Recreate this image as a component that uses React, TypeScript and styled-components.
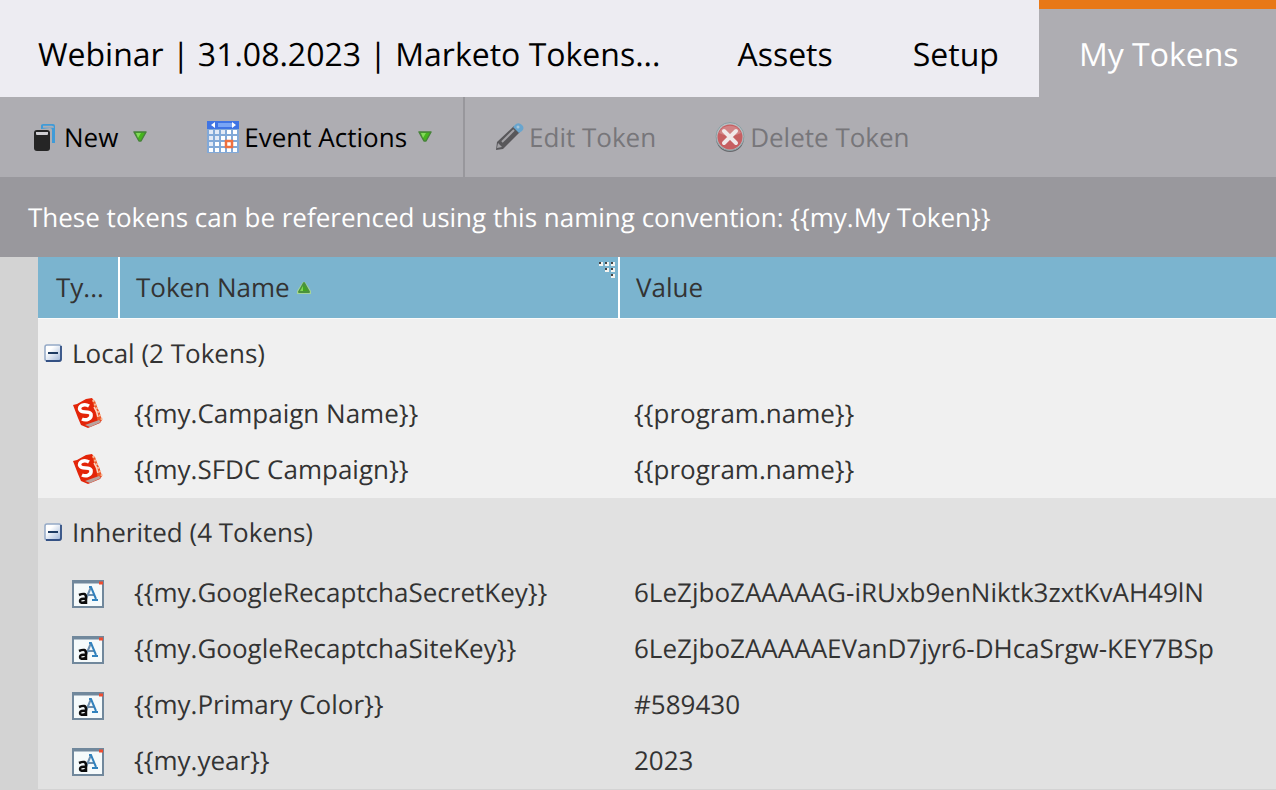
import React from 'react';
import styled, { createGlobalStyle } from 'styled-components';

const GlobalStyle = createGlobalStyle`
  *, *::before, *::after { box-sizing: border-box; }
  html { overflow: hidden; }
  body {
    margin: 0;
    background: #e1e1e1;
    color: #333333;
    font-family: "Open Sans", "Noto Sans", sans-serif;
    font-size: 26px;
    line-height: 36px;
    text-rendering: geometricPrecision;
  }
  button { text-rendering: inherit; }
`;

const Page = styled.div`
  display: flex;
  flex-direction: column;
  min-height: 100vh;
`;

const TabBar = styled.nav`
  display: flex;
  height: 97px;
  background: #aeadb2;
`;

const Tab = styled.a<{ $active?: boolean }>`
  display: flex;
  align-items: center;
  flex: ${(p) => (p.$active ? '1 0 auto' : '0 0 auto')};
  padding: ${(p) => (p.$active ? '4px 36px 0 40px' : '13px 40px 0')};
  border-top: ${(p) => (p.$active ? '9px solid #e87817' : 'none')};
  background: ${(p) => (p.$active ? '#aeadb2' : '#edecf2')};
  color: ${(p) => (p.$active ? '#ffffff' : '#000000')};
  font-size: 32px;
  line-height: 44px;
  text-decoration: none;
  white-space: nowrap;
  &:first-child { padding-left: 38px; padding-right: 37px; }
`;

const Toolbar = styled.div`
  display: flex;
  height: 80px;
  background: #aeadb2;
`;

const ToolGroup = styled.div<{ $divided?: boolean }>`
  display: flex;
  align-items: center;
  gap: 58px;
  padding: 0 30px 0 32px;
  border-right: ${(p) => (p.$divided ? '2px solid #98979c' : 'none')};
  & + & { padding-left: 30px; }
`;

const ToolButton = styled.button<{ $iconGap?: number }>`
  display: flex;
  align-items: center;
  gap: ${(p) => p.$iconGap ?? 4}px;
  padding: 0;
  border: 0;
  background: none;
  color: #000000;
  font: inherit;
  white-space: nowrap;
  &:disabled { color: #77767a; }
  svg { flex: none; }
`;

const Arrow = styled.span`
  display: flex;
  margin-left: 6px;
`;

const Notice = styled.p`
  margin: 0;
  padding: 22px 28px;
  background: #99989d;
  color: #ffffff;
`;

const GridArea = styled.main`
  flex: 1;
  padding-left: 38px;
  background: #d3d3d3;
`;

const Table = styled.table`
  width: 100%;
  border-collapse: separate;
  border-spacing: 0;
  table-layout: fixed;
  text-align: left;
`;

const TypeCol = styled.col`
  width: 82px;
`;

const NameCol = styled.col`
  width: 500px;
`;

const HeadCell = styled.th<{ $divided?: boolean }>`
  height: 62px;
  padding: 0 16px 2px;
  border-bottom: 1px solid #fafafa;
  border-right: ${(p) => (p.$divided ? '2px solid #ffffff' : 'none')};
  background: #7bb4cf;
  font-weight: 400;
  white-space: nowrap;
  &:first-child { padding: 0 0 2px 18px; }
`;

const HeadLabel = styled.div`
  position: relative;
  display: flex;
  align-items: center;
  gap: 6px;
`;

const Grip = styled.svg`
  position: absolute;
  top: -8px;
  right: -14px;
`;

const Group = styled.tbody<{ $shaded?: boolean }>`
  background: ${(p) => (p.$shaded ? '#e1e1e1' : '#f0f0f0')};
`;

const GroupCell = styled.th`
  height: 67px;
  padding: 0 6px;
  font-weight: 400;
`;

const GroupToggle = styled.button`
  display: flex;
  align-items: center;
  gap: 10px;
  padding: 0;
  border: 0;
  background: none;
  color: inherit;
  font: inherit;
`;

const Cell = styled.td`
  height: 56px;
  padding: 0 14px 2px;
  white-space: nowrap;
`;

const IconCell = styled(Cell)`
  padding: 0 34px 2px;
  svg { display: block; }
`;

const NewIcon = () => (
  <svg width="24" height="30" viewBox="0 0 24 30" aria-hidden="true">
    <path d="M9 7V3.500q0-1.500 2-1.500h10q2 0 2 2v17h-3V8q0-2-2-2" fill="#3f9bd8" />
    <path d="M11 4.800h9q1 0 1 1" fill="none" stroke="#aeadb2" strokeWidth="2" />
    <path d="M2 11q0-3 3-3h10q3 0 3 3v15q0 3-3 3H5q-3 0-3-3z" fill="#252525" />
    <path d="M4 10h12v2q0 1-1 1H5q-1 0-1-1z" fill="#cfced2" />
  </svg>
);

const CalendarIcon = () => (
  <svg width="34" height="34" viewBox="0 0 34 34" aria-hidden="true">
    <rect x="1" y="1" width="32" height="32" fill="#82a9d8" />
    <rect x="1" y="1" width="32" height="8" fill="#3f74e4" />
    <path d="M12 3h14v4H12z" fill="#79a5f5" />
    <path d="M9 2v6L5 5zM26 2v6l4-3z" fill="#ffffff" />
    {[10, 16, 22, 28].map((y) =>
      [3, 9, 15, 21, 27].map((x) => (
        <rect key={`${x}-${y}`} x={x} y={y} width="4" height="4" fill={x + y < 28 ? '#e2e9f5' : '#ffffff'} />
      )),
    )}
    <rect x="20" y="21" width="6" height="6" fill="#ffffff" stroke="#ee7040" strokeWidth="2.500" />
  </svg>
);

const PencilIcon = () => (
  <svg width="30" height="30" viewBox="0 0 30 30" aria-hidden="true">
    <path d="M1 28l1-8L19 4l6 6L8 27z" fill="#58575a" />
    <path d="M18 5l3-3q3-2 6 1t0 6l-3 2z" fill="#69a5ce" />
    <path d="M7 20L19 8" stroke="#a2a1a5" strokeWidth="2" />
    <path d="M2 26l1-5 4 4z" fill="#a2a1a5" />
    <circle cx="23" cy="5" r="1.500" fill="#a7c4d6" />
  </svg>
);

const DeleteIcon = () => (
  <svg width="32" height="32" viewBox="0 0 32 32" aria-hidden="true">
    <circle cx="16" cy="17" r="14" fill="#67676b" />
    <circle cx="16" cy="15.500" r="14" fill="#b7bdc1" stroke="#8ba0a4" strokeWidth="1" />
    <circle cx="16" cy="16" r="12.500" fill="#c65f62" />
    <path d="M5 12a12 12 0 0 1 22 0q-11 6-22 0z" fill="#d18385" />
    <path d="M10 10l12 12M22 10L10 22" stroke="#f0e8ea" strokeWidth="4" strokeLinecap="round" />
  </svg>
);

const DownArrow = () => (
  <svg width="16" height="16" viewBox="0 0 16 16" aria-hidden="true">
    <path d="M2 3h12L9 12H7z" fill="#45b51d" stroke="#47833a" strokeWidth="1.500" strokeLinejoin="round" />
    <path d="M4 4h5l-3 5z" fill="#83d95b" />
  </svg>
);

const SortArrow = () => (
  <svg width="16" height="16" viewBox="0 0 16 16" aria-hidden="true">
    <path d="M7 3L1 12v3h14v-3L9 3z" fill="#a5d597" />
    <path d="M8 4L3 13h10z" fill="#41a51f" stroke="#4b923d" strokeWidth="2" strokeLinejoin="round" />
    <path d="M7 7L4 12h3z" fill="#82d356" />
  </svg>
);

const gripDots = [[0, 0], [6, 0], [12, 0], [6, 6], [12, 6], [12, 12]];

const GripIcon = () => (
  <Grip width="18" height="18" viewBox="0 0 18 18" aria-hidden="true">
    {gripDots.map(([x, y]) => (
      <g key={`${x}-${y}`}>
        <rect x={x + 1} y={y + 1} width="4" height="4" fill="#f3f3f0" />
        <rect x={x + 1} y={y + 1} width="2" height="2" fill="#444444" />
      </g>
    ))}
  </Grip>
);

const MinusIcon = () => (
  <svg width="18" height="18" viewBox="0 0 18 18" aria-hidden="true">
    <defs>
      <linearGradient id="toggle" x1="0" y1="0" x2="1" y2="1">
        <stop offset="0.300" stopColor="#ffffff" />
        <stop offset="1" stopColor="#9db5d8" />
      </linearGradient>
    </defs>
    <rect x="1" y="1" width="16" height="16" rx="2" fill="url(#toggle)" stroke="#94a9c6" strokeWidth="1.500" />
    <path d="M17 2v13q0 2-2 2H2" fill="none" stroke="#345184" strokeWidth="1.800" />
    <path d="M4 9h10" stroke="#1d3b62" strokeWidth="2" />
  </svg>
);

const ScriptIcon = () => (
  <svg width="32" height="32" viewBox="0 0 32 32" aria-hidden="true">
    <path d="M1 8L5 7 14 2l6-1 2 3 2 5 3 5 3 9-2 3-12 5-7-3-3-7z" fill="#e32509" />
    <path d="M20 2l3 2 7 19-4 2z" fill="#ee5726" />
    <path d="M13 28l14-5 2 2-11 5z" fill="#b9a39e" />
    <path d="M21 3l9 20" stroke="#f6b999" strokeWidth="2" strokeDasharray="2 2" />
    <path d="M17 9C12 6 6 9 8 13c2 4 9 0 11 4 1 5-5 7-9 5" fill="none" stroke="#ffffff" strokeWidth="3.500" />
    <path d="M22 10q3 4 4 10" fill="none" stroke="#fbd5c6" strokeWidth="1.500" />
  </svg>
);

const TextIcon = () => (
  <svg width="32" height="32" viewBox="0 -4 32 32" aria-hidden="true">
    <rect x="1" y="1" width="30" height="26" fill="#f5fafb" stroke="#71889c" strokeWidth="2" />
    <path d="M1 2h30" stroke="#71889c" strokeWidth="3" />
    <path d="M27 3h4" stroke="#ee4d31" strokeWidth="3" />
    <path d="M14 19L19 7M16 15h6" fill="none" stroke="#6d8fae" strokeWidth="2" />
    <path d="M17 7h2l5 12M20 20h6" fill="none" stroke="#3182bd" strokeWidth="2" />
    <path d="M7 15q7-3 7 2v7M14 19q-6-1-6 2t6 1" fill="none" stroke="#0b0b0b" strokeWidth="2.500" />
  </svg>
);

type Token = { name: string; value: string };

const groups: { label: string; shaded: boolean; type: string; Icon: () => React.ReactElement; tokens: Token[] }[] = [
  {
    label: 'Local (2 Tokens)',
    shaded: false,
    type: 'Script',
    Icon: ScriptIcon,
    tokens: [
      { name: '{{my.Campaign Name}}', value: '{{program.name}}' },
      { name: '{{my.SFDC Campaign}}', value: '{{program.name}}' },
    ],
  },
  {
    label: 'Inherited (4 Tokens)',
    shaded: true,
    type: 'Text',
    Icon: TextIcon,
    tokens: [
      { name: '{{my.GoogleRecaptchaSecretKey}}', value: '6LeZjboZAAAAAG-iRUxb9enNiktk3zxtKvAH49lN' },
      { name: '{{my.GoogleRecaptchaSiteKey}}', value: '6LeZjboZAAAAAEVanD7jyr6-DHcaSrgw-KEY7BSp' },
      { name: '{{my.Primary Color}}', value: '#589430' },
      { name: '{{my.year}}', value: '2023' },
    ],
  },
];

export default function App() {
  return (
    <>
      <GlobalStyle />
      <Page>
        <TabBar>
          <Tab href="#program">Webinar | 31.08.2023 | Marketo Tokens...</Tab>
          <Tab href="#assets">Assets</Tab>
          <Tab href="#setup">Setup</Tab>
          <Tab href="#tokens" $active aria-current="page">My Tokens</Tab>
        </TabBar>
        <Toolbar>
          <ToolGroup $divided>
            <ToolButton $iconGap={8}>
              <NewIcon />
              New
              <Arrow><DownArrow /></Arrow>
            </ToolButton>
            <ToolButton>
              <CalendarIcon />
              Event Actions
              <Arrow><DownArrow /></Arrow>
            </ToolButton>
          </ToolGroup>
          <ToolGroup>
            <ToolButton disabled>
              <PencilIcon />
              Edit Token
            </ToolButton>
            <ToolButton disabled>
              <DeleteIcon />
              Delete Token
            </ToolButton>
          </ToolGroup>
        </Toolbar>
        <Notice>{'These tokens can be referenced using this naming convention: {{my.My Token}}'}</Notice>
        <GridArea>
          <Table>
            <colgroup>
              <TypeCol />
              <NameCol />
              <col />
            </colgroup>
            <thead>
              <tr>
                <HeadCell scope="col" $divided>Ty...</HeadCell>
                <HeadCell scope="col" $divided aria-sort="ascending">
                  <HeadLabel>
                    Token Name
                    <SortArrow />
                    <GripIcon />
                  </HeadLabel>
                </HeadCell>
                <HeadCell scope="col">Value</HeadCell>
              </tr>
            </thead>
            {groups.map(({ label, shaded, type, Icon, tokens }) => (
              <Group key={label} $shaded={shaded}>
                <tr>
                  <GroupCell scope="rowgroup" colSpan={3}>
                    <GroupToggle aria-expanded="true">
                      <MinusIcon />
                      {label}
                    </GroupToggle>
                  </GroupCell>
                </tr>
                {tokens.map((token) => (
                  <tr key={token.name}>
                    <IconCell aria-label={type}><Icon /></IconCell>
                    <Cell>{token.name}</Cell>
                    <Cell>{token.value}</Cell>
                  </tr>
                ))}
              </Group>
            ))}
          </Table>
        </GridArea>
      </Page>
    </>
  );
}
